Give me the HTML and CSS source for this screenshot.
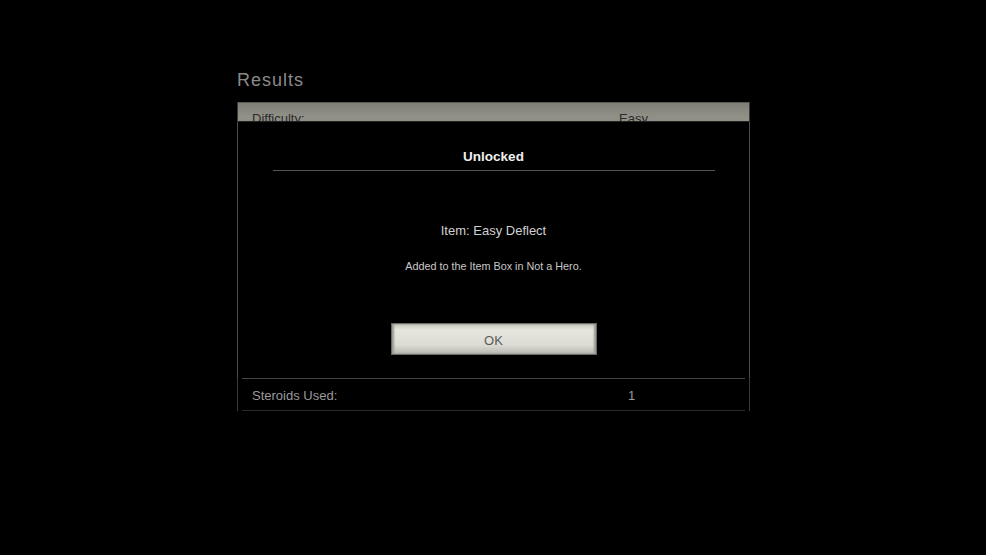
FILE: index.html
```html
<!DOCTYPE html>
<html lang="en">
<head>
    <meta charset="UTF-8">
    <meta name="viewport" content="width=device-width, initial-scale=1.0">
    <title>Results</title>
    <link rel="stylesheet" href="styles.css">
</head>
<body>
    <div class="page">
        <h1 class="title">Results</h1>
        <div class="results">
            <div class="row row-head">
                <span class="label">Difficulty:</span>
                <span class="value">Easy</span>
            </div>
            <div class="rows-body"></div>
            <div class="row row-last">
                <span class="label">Steroids Used:</span>
                <span class="value">1</span>
            </div>

            <div class="dialog">
                <div class="dialog-title">Unlocked</div>
                <div class="dialog-item">Item: Easy Deflect</div>
                <div class="dialog-note">Added to the Item Box in Not a Hero.</div>
                <button class="ok" type="button">OK</button>
            </div>
        </div>
    </div>
</body>
</html>
```

FILE: styles.css
```css
html, body {
    margin: 0;
    background: #000;
    height: 100%;
}
.page {
    width: 513px;
    margin-left: 237px;
    padding-top: 68px;
    font-family: "Liberation Sans", Arial, sans-serif;
}
.title {
    margin: 0 0 10px 0;
    font-family: "Liberation Sans", Arial, sans-serif;
    font-weight: normal;
    font-size: 18px;
    letter-spacing: 1px;
    color: #8a8a8a;
    line-height: 24px;
}
.results {
    position: relative;
    border-left: 1px solid #3a3a3a;
    border-right: 1px solid #3a3a3a;
}
.row {
    display: flex;
    align-items: center;
    height: 31px;
    font-size: 13px;
}
.label {
    width: 367px;
    padding-left: 14px;
}
.row-head {
    background: linear-gradient(#7e7e76, #8f8f86 40%, #96968c);
    border-top: 1px solid #5a5a55;
    color: #2a2a2a;
}
.rows-body {
    height: 244px;
}
.row-last {
    color: #9a9a9a;
    margin: 0 4px;
    border-top: 1px solid #444;
    border-bottom: 1px solid #2a2a2a;
    padding-top: 2px;
    height: 29px;
}
.row-last .label {
    width: 376px;
    padding-left: 10px;
}

/* unlock popup drawn over the results list */
.dialog {
    position: absolute;
    top: 19px;
    left: -1px;
    right: -1px;
    height: 256px;
    background: #000;
    border-left: 1px solid #4a4a4a;
    border-right: 1px solid #4a4a4a;
    border-top: 1px solid #222;
    display: flex;
    flex-direction: column;
    align-items: center;
}
.dialog-title {
    width: 442px;
    margin-top: 27px;
    padding-bottom: 6px;
    border-bottom: 1px solid #555;
    text-align: center;
    color: #f0f0f0;
    font-size: 13.5px;
    font-weight: bold;
}
.dialog-item {
    margin-top: 52px;
    color: #d0d0d0;
    font-size: 13px;
}
.dialog-note {
    margin-top: 22px;
    color: #c8c8c8;
    font-size: 10.8px;
}
.ok {
    margin-top: 51px;
    width: 206px;
    height: 32px;
    background: linear-gradient(#c8c8c0, #e6e6de 20%, #dcdcd4 70%, #b8b8b0);
    border: 1px solid #6a6a66;
    border-radius: 0;
    box-shadow: inset 2px 0 2px #9a9a94, inset -2px 0 2px #9a9a94;
    color: #5a5a5a;
    font-family: "Liberation Sans", Arial, sans-serif;
    font-size: 13px;
    padding: 2px 0 0 0;
}
```
